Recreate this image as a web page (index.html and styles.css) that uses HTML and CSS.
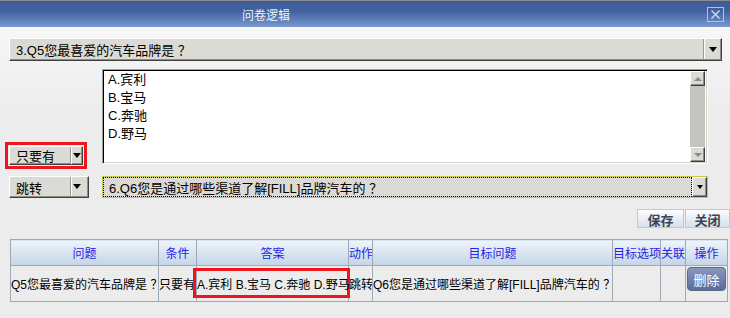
FILE: index.html
```html
<!DOCTYPE html>
<html lang="zh-CN">
<head>
  <meta charset="UTF-8">
  <title>问卷逻辑</title>
  <link rel="stylesheet" href="styles.css">
</head>
<body>
  <div class="titlebar">
    <span class="title">问卷逻辑</span>
    <span class="close">
      <svg width="15" height="13" viewBox="0 0 15 13"><path d="M3.5 2.5 L11.5 10.5 M11.5 2.5 L3.5 10.5" stroke="#d6deef" stroke-width="1.3" fill="none"/></svg>
    </span>
  </div>
  <div class="content">
    <div class="combo combo-wide">
      <span class="combo-text">3.Q5您最喜爱的汽车品牌是<span class="fw">？</span></span>
      <span class="combo-btn"><i class="arrow"></i></span>
    </div>

    <div class="rule">
      <div class="rule-side">
        <span class="mark">
          <span class="combo combo-small cond">
            <span class="combo-text">只要有</span>
            <span class="combo-btn"><i class="arrow"></i></span>
          </span>
        </span>
      </div>
      <div class="listbox">
        <div class="options">
          <div>A.宾利</div>
          <div>B.宝马</div>
          <div>C.奔驰</div>
          <div>D.野马</div>
        </div>
        <div class="scrollbar">
          <span class="sb-btn"><i class="tri up"></i></span>
          <span class="sb-track"></span>
          <span class="sb-btn"><i class="tri down"></i></span>
        </div>
      </div>
    </div>

    <div class="rule rule-target">
      <span class="combo combo-small jump">
        <span class="combo-text">跳转</span>
        <span class="combo-btn"><i class="arrow"></i></span>
      </span>
      <div class="combo combo-focus">
        <span class="combo-text">6.Q6您是通过哪些渠道了解[FILL]品牌汽车的<span class="fw">？</span></span>
        <span class="combo-btn"><i class="arrow small"></i></span>
      </div>
    </div>

    <div class="actions">
      <button class="btn save">保存</button>
      <button class="btn">关闭</button>
    </div>

    <table class="grid">
      <colgroup>
        <col style="width:148px"><col style="width:38px"><col style="width:152px"><col style="width:24px">
        <col style="width:240px"><col style="width:48px"><col style="width:25px"><col style="width:42px">
      </colgroup>
      <thead>
        <tr>
          <th>问题</th><th>条件</th><th>答案</th><th>动作</th>
          <th>目标问题</th><th>目标选项</th><th>关联</th><th>操作</th>
        </tr>
      </thead>
      <tbody>
        <tr>
          <td>Q5您最喜爱的汽车品牌是<span class="fw">？</span></td>
          <td>只要有</td>
          <td class="answer"><span class="hl">A.宾利 B.宝马 C.奔驰 D.野马</span></td>
          <td>跳转</td>
          <td>Q6您是通过哪些渠道了解[FILL]品牌汽车的<span class="fw">？</span></td>
          <td></td>
          <td></td>
          <td class="op"><button class="del">删除</button></td>
        </tr>
      </tbody>
    </table>
  </div>
</body>
</html>
```

FILE: styles.css
```css
html, body {
  margin: 0;
  width: 730px;
  height: 318px;
  overflow: hidden;
}
body {
  font-family: "Liberation Sans", "Noto Sans CJK SC", sans-serif;
  font-size: 13px;
  color: #000;
  background: #ececec;
}
/* full-width question mark, glyph nudged to the middle of its em */
.fw {
  padding-left: 0.3em;
  letter-spacing: -0.3em;
  font-family: "Noto Sans CJK SC", sans-serif;
}

/* title bar */
.titlebar {
  height: 26px;
  border-top: 1px solid #8c8c8c;
  background: linear-gradient(#3d5b98, #42619f 40%, #7a99d1);
  display: flex;
  align-items: center;
}
.title {
  margin-left: 242px;
  font-size: 12px;
  color: #eef2fa;
}
.close {
  margin-left: auto;
  margin-right: 6px;
  width: 15px;
  height: 13px;
  border: 1px solid #b4c2e2;
  display: flex;
}

.content {
  height: 291px;
  box-sizing: border-box;
  padding: 11px 0 0 9px;
  background: linear-gradient(#f7f7f7, #ececec 90px);
}

/* combo boxes */
.combo {
  display: flex;
  box-sizing: border-box;
  background: #dcdad5;
  border: 1px solid;
  border-color: #fff #404040 #404040 #fff;
  box-shadow: inset -1px -1px #8e8c87;
}
.combo-text {
  flex: 1;
  display: flex;
  align-items: center;
  white-space: nowrap;
  overflow: hidden;
}
.combo-btn {
  display: flex;
  align-items: center;
  justify-content: center;
  border-left: 1px solid #9a9893;
  box-shadow: inset 1px 0 #fff;
}
.arrow {
  width: 0;
  height: 0;
  border-left: 4.5px solid transparent;
  border-right: 4.5px solid transparent;
  border-top: 5px solid #000;
}
.arrow.small {
  border-left-width: 3px;
  border-right-width: 3px;
  border-top-width: 4px;
}

.combo-wide {
  width: 713px;
  height: 23px;
}
.combo-wide .combo-text { padding-left: 6px; }
.combo-wide .combo-btn { width: 17px; margin-bottom: 1px; }

.combo-small .combo-text { padding-left: 6px; }
.combo-small .combo-btn {
  justify-content: flex-start;
  padding-left: 2px;
}
.cond {
  width: 74px;
  height: 19px;
}
.cond .combo-btn { width: 9px; }
.jump {
  width: 80px;
  height: 22px;
}
.jump .combo-btn { width: 15px; margin-bottom: 1px; }

.combo-focus {
  width: 606px;
  height: 22px;
  border: 1px solid #c6c64a;
  box-shadow: none;
}
.combo-focus .combo-text {
  padding-left: 5px;
  border: 1px dotted #000;
}
.combo-focus .combo-btn {
  width: 15px;
  box-sizing: border-box;
  border: 1px solid;
  border-color: #fff #404040 #404040 #fff;
  box-shadow: inset -1px -1px #8e8c87;
}

/* condition rows */
.rule {
  display: grid;
  grid-template-columns: 93px 606px;
  margin-top: 8px;
}
.rule-side {
  display: flex;
  align-items: flex-end;
}
.mark {
  display: inline-flex;
  margin: 0 0 -5px -4px;
  padding: 1px;
  border: 3px solid #f0141e;
}
.rule-target { margin-top: 12px; }

.listbox {
  height: 95px;
  box-sizing: border-box;
  display: flex;
  background: #fff;
  border: 1px solid;
  border-color: #a0a0a0 #fff #fff #a0a0a0;
  box-shadow: inset 1px 1px #000, inset -1px -1px #d4d0c8;
  padding: 1px 2px 1px 1px;
}
.options {
  flex: 1;
  padding-left: 4px;
  line-height: 18px;
}
.scrollbar {
  width: 15px;
  display: flex;
  flex-direction: column;
  background: #c6c4bf;
}
.sb-track { flex: 1; }
.sb-btn {
  height: 15px;
  box-sizing: border-box;
  display: flex;
  align-items: center;
  justify-content: center;
  background: #dcdad5;
  border: 1px solid;
  border-color: #fff #404040 #404040 #fff;
  box-shadow: inset -1px -1px #8e8c87;
}
.tri {
  width: 0;
  height: 0;
  border-left: 4px solid transparent;
  border-right: 4px solid transparent;
}
.tri.up { border-bottom: 4px solid #8a8a8a; }
.tri.down { border-top: 4px solid #8a8a8a; }

/* save / close */
.actions {
  display: flex;
  justify-content: flex-end;
  gap: 1px;
  margin-top: 11px;
}
.btn {
  height: 19px;
  width: 45px;
  padding: 0;
  font-family: inherit;
  font-size: 13px;
  font-weight: bold;
  color: #3a4656;
  background: linear-gradient(#fbfcfd, #d8e0ea);
  border: 1px solid #c0cad7;
}
.btn.save { width: 47px; }

/* rule table */
.grid {
  margin: 11px 0 0 1px;
  width: 717px;
  table-layout: fixed;
  border-collapse: collapse;
  font-size: 12px;
}
.grid th, .grid td {
  border: 1px solid #9ea9b6;
  padding: 0;
  white-space: nowrap;
  overflow: hidden;
}
.grid th {
  height: 25px;
  font-weight: normal;
  color: #2424e6;
  background: linear-gradient(#eef4fa, #c4d5e6);
  text-align: center;
}
.grid td {
  height: 34px;
  text-align: left;
}
.grid td.answer { overflow: visible; position: relative; }
.hl {
  position: absolute;
  left: -4px;
  top: 2px;
  bottom: 3px;
  right: -2px;
  display: flex;
  align-items: center;
  padding-left: 1px;
  border: 3px solid #f0141e;
}
.grid td.op {
  vertical-align: top;
  padding: 1px 0 0 1px;
}
.del {
  width: 39px;
  height: 24px;
  padding: 0;
  font-family: inherit;
  font-size: 13px;
  color: #fff;
  border: 1px solid #5d6a86;
  border-radius: 4px;
  background: linear-gradient(#8a98be, #5a6b9b);
}
```
